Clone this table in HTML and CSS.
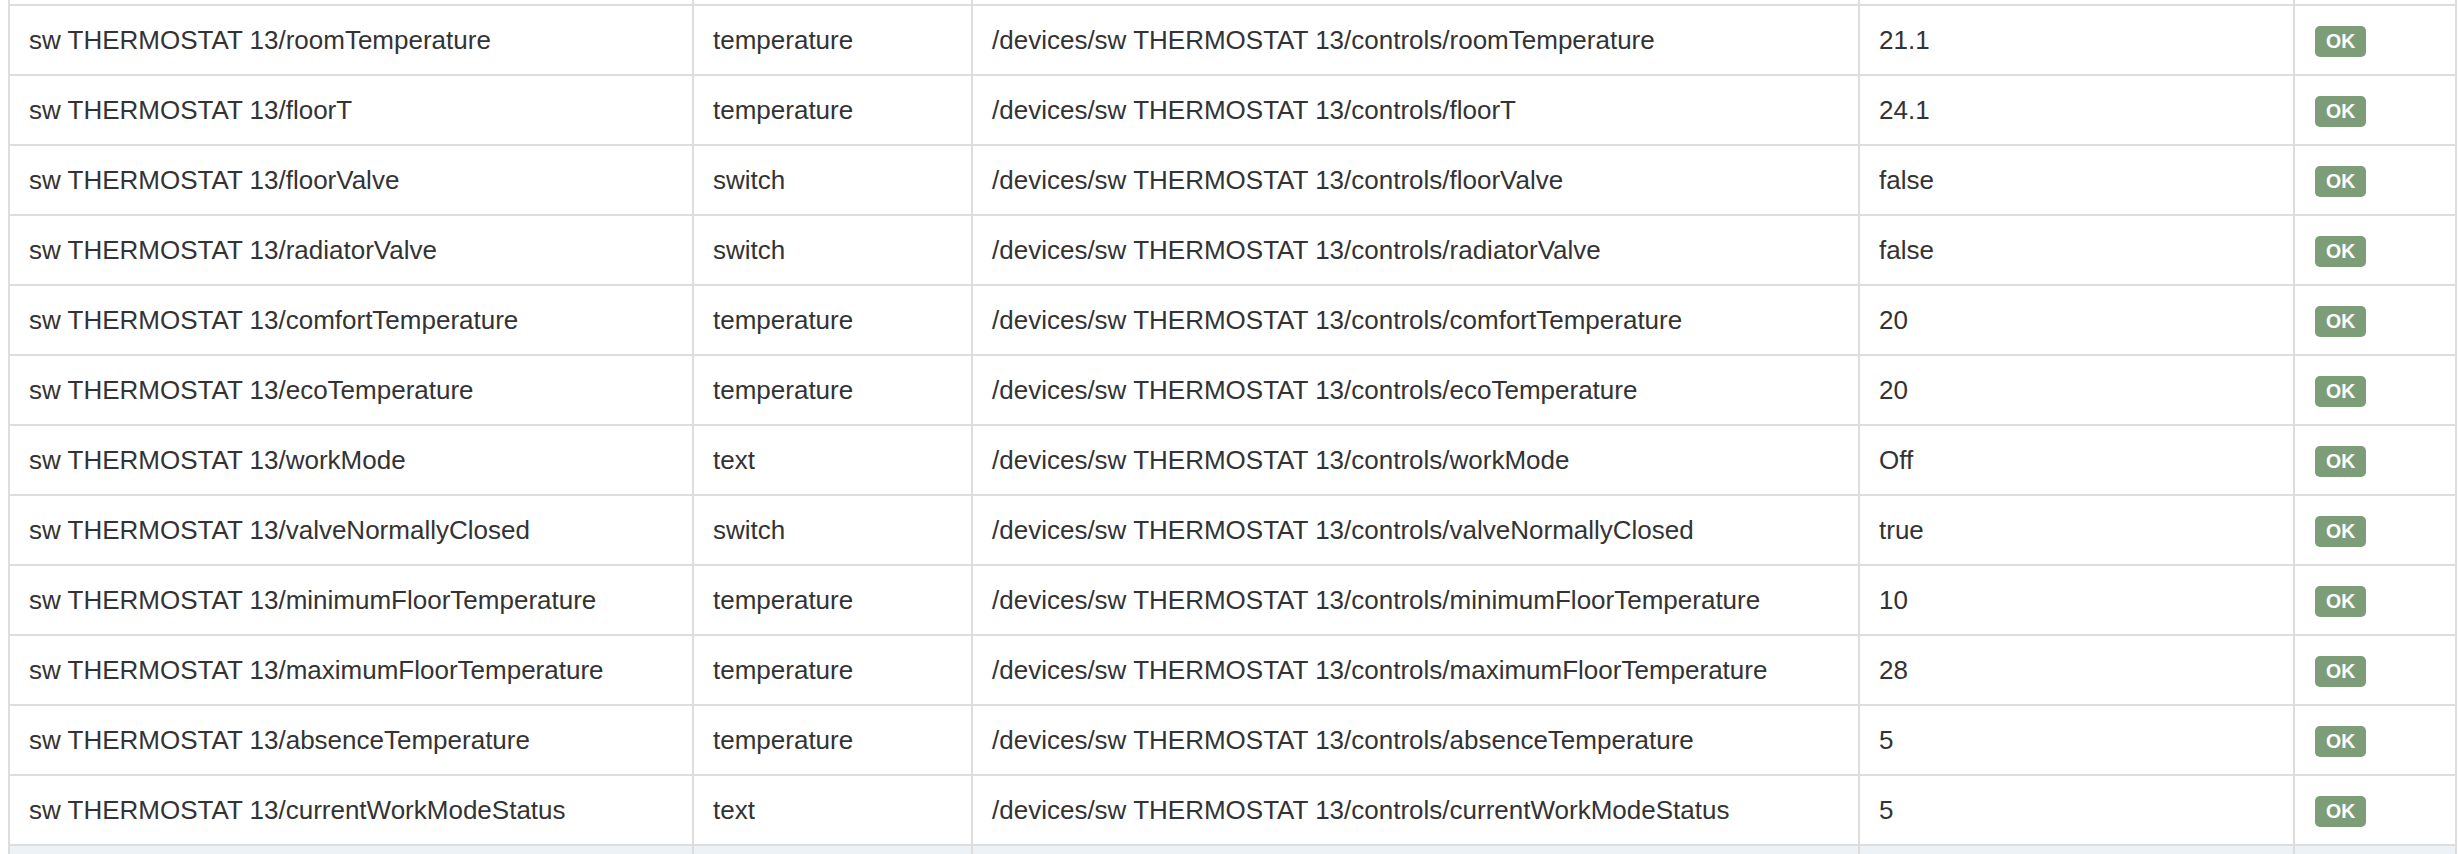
FILE: index.html
```html
<!DOCTYPE html>
<html>
<head>
<meta charset="utf-8">
<link rel="stylesheet" href="styles.css">
</head>
<body>
<div class="page">
  <div class="grid">
    <div class="cell cap"></div><div class="cell cap"></div><div class="cell cap"></div><div class="cell cap"></div><div class="cell cap"></div>

    <div class="cell">sw THERMOSTAT 13/roomTemperature</div><div class="cell">temperature</div><div class="cell">/devices/sw THERMOSTAT 13/controls/roomTemperature</div><div class="cell">21.1</div><div class="cell"><span class="label">OK</span></div>

    <div class="cell">sw THERMOSTAT 13/floorT</div><div class="cell">temperature</div><div class="cell">/devices/sw THERMOSTAT 13/controls/floorT</div><div class="cell">24.1</div><div class="cell"><span class="label">OK</span></div>

    <div class="cell">sw THERMOSTAT 13/floorValve</div><div class="cell">switch</div><div class="cell">/devices/sw THERMOSTAT 13/controls/floorValve</div><div class="cell">false</div><div class="cell"><span class="label">OK</span></div>

    <div class="cell">sw THERMOSTAT 13/radiatorValve</div><div class="cell">switch</div><div class="cell">/devices/sw THERMOSTAT 13/controls/radiatorValve</div><div class="cell">false</div><div class="cell"><span class="label">OK</span></div>

    <div class="cell">sw THERMOSTAT 13/comfortTemperature</div><div class="cell">temperature</div><div class="cell">/devices/sw THERMOSTAT 13/controls/comfortTemperature</div><div class="cell">20</div><div class="cell"><span class="label">OK</span></div>

    <div class="cell">sw THERMOSTAT 13/ecoTemperature</div><div class="cell">temperature</div><div class="cell">/devices/sw THERMOSTAT 13/controls/ecoTemperature</div><div class="cell">20</div><div class="cell"><span class="label">OK</span></div>

    <div class="cell">sw THERMOSTAT 13/workMode</div><div class="cell">text</div><div class="cell">/devices/sw THERMOSTAT 13/controls/workMode</div><div class="cell">Off</div><div class="cell"><span class="label">OK</span></div>

    <div class="cell">sw THERMOSTAT 13/valveNormallyClosed</div><div class="cell">switch</div><div class="cell">/devices/sw THERMOSTAT 13/controls/valveNormallyClosed</div><div class="cell">true</div><div class="cell"><span class="label">OK</span></div>

    <div class="cell">sw THERMOSTAT 13/minimumFloorTemperature</div><div class="cell">temperature</div><div class="cell">/devices/sw THERMOSTAT 13/controls/minimumFloorTemperature</div><div class="cell">10</div><div class="cell"><span class="label">OK</span></div>

    <div class="cell">sw THERMOSTAT 13/maximumFloorTemperature</div><div class="cell">temperature</div><div class="cell">/devices/sw THERMOSTAT 13/controls/maximumFloorTemperature</div><div class="cell">28</div><div class="cell"><span class="label">OK</span></div>

    <div class="cell">sw THERMOSTAT 13/absenceTemperature</div><div class="cell">temperature</div><div class="cell">/devices/sw THERMOSTAT 13/controls/absenceTemperature</div><div class="cell">5</div><div class="cell"><span class="label">OK</span></div>

    <div class="cell">sw THERMOSTAT 13/currentWorkModeStatus</div><div class="cell">text</div><div class="cell">/devices/sw THERMOSTAT 13/controls/currentWorkModeStatus</div><div class="cell">5</div><div class="cell"><span class="label">OK</span></div>

    <div class="cell next"></div><div class="cell next"></div><div class="cell next"></div><div class="cell next"></div><div class="cell next"></div>
  </div>
</div>
</body>
</html>
```
FILE: styles.css
```css
html, body {
  margin: 0;
  padding: 0;
  background: #ffffff;
}

.page {
  padding-left: 8px;
  height: 854px;
  overflow: hidden;
}

.grid {
  display: grid;
  grid-template-columns: 684px 279px 887px 435px 162px;
  grid-template-rows: 6px;
  grid-auto-rows: 70px;
  border-left: 2px solid #dddddd;
  width: max-content;
  font-family: "Liberation Sans", Arial, Helvetica, sans-serif;
  font-size: 26px;
  color: #333333;
}

.cell {
  box-sizing: border-box;
  border-right: 2px solid #dddddd;
  border-bottom: 2px solid #dddddd;
  padding: 0 19px;
  display: flex;
  align-items: center;
  white-space: nowrap;
  background: #ffffff;
}

.cell.next {
  background: #edf2f6;
  border-bottom: none;
}

.label {
  display: inline-block;
  background: #7d9d79;
  color: #ffffff;
  font-weight: bold;
  font-size: 19.5px;
  line-height: 31px;
  height: 31px;
  padding: 0 11px;
  border-radius: 5px;
  margin-left: 1px;
  margin-top: 3px;
}
```
